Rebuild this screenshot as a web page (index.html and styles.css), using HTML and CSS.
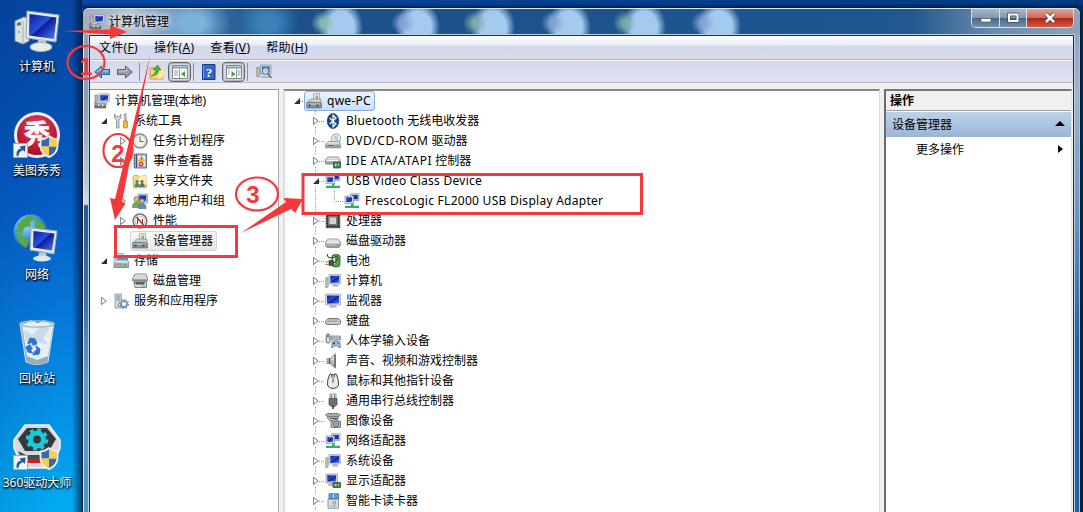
FILE: index.html
```
<!DOCTYPE html>
<html lang="zh-CN">
<head>
  <meta charset="utf-8">
  <title>计算机管理</title>
  <link rel="stylesheet" href="styles.css">
</head>
<body>
  <!-- Icon library -->
  <svg class="defs" width="0" height="0">
    <defs>
      <linearGradient id="screen" x1="0" y1="0" x2="1" y2="1">
        <stop offset="0" stop-color="#0a1fa0"/><stop offset=".45" stop-color="#2b50d8"/><stop offset=".5" stop-color="#0b1c9c"/><stop offset="1" stop-color="#4f7df0"/>
      </linearGradient>
      <linearGradient id="metal" x1="0" y1="0" x2="0" y2="1">
        <stop offset="0" stop-color="#f4f5f6"/><stop offset="1" stop-color="#8d9397"/>
      </linearGradient>
      <radialGradient id="redball" cx=".5" cy=".3" r=".7">
        <stop offset="0" stop-color="#e5405e"/><stop offset="1" stop-color="#a80d26"/>
      </radialGradient>
      <radialGradient id="globe" cx=".35" cy=".3" r=".75">
        <stop offset="0" stop-color="#9fdcff"/><stop offset=".6" stop-color="#2d86d4"/><stop offset="1" stop-color="#0d4694"/>
      </radialGradient>
    </defs>
    <symbol id="i-monitor" viewBox="0 0 16 16">
      <path d="M.5 1h15v11H.5z" fill="#d8dde0" stroke="#a4aaae" stroke-width=".8"/>
      <path d="M2 2.500h12v8H2z" fill="url(#screen)"/>
      <path d="M6 12h4l2.500 2.500h-9z" fill="#aeb4b8"/>
    </symbol>
    <symbol id="i-pc" viewBox="0 0 16 16">
      <path d="M.7 5l2.500-1v10l-2.500 1z" fill="#b9c3ae" stroke="#879078" stroke-width=".6"/>
      <path d="M4 1.500h11.500v9.500H4z" fill="#d8dde0" stroke="#a4aaae" stroke-width=".7"/>
      <path d="M5.300 2.800h9v7h-9z" fill="url(#screen)"/>
      <path d="M8 11h4l2 2.500H7z" fill="#aeb4b8"/>
    </symbol>
    <symbol id="i-manage" viewBox="0 0 16 16">
      <path d="M1 2h3v8H1z" fill="#b5bbbf" stroke="#70777c" stroke-width=".6"/>
      <path d="M5 .8h10.300v8H5z" fill="#dadfe3" stroke="#91999f" stroke-width=".7"/>
      <path d="M6.300 2.200h7.700v5.300H6.300z" fill="url(#screen)"/>
      <path d="M.8 10h11v5H.8z" fill="#737a7f" stroke="#474d52" stroke-width=".6"/>
      <path d="M1 11h10.500M3 9.500h5" stroke="#c7ccd0"/><path d="M4 11.500h1.500v1.500H4zm4 0h1.500v1.500H8z" fill="#eee"/>
      <path d="M10 9.500h3l1.500 2h-3z" fill="#b4babe"/>
    </symbol>
    <symbol id="i-device" viewBox="0 0 16 16">
      <path d="M7.500 1l6-.6V8h-6z" fill="#f1f1e6" stroke="#8b928f" stroke-width=".7"/>
      <path d="M9.500 2.500h2.500v3.500h-2.500z" fill="#8ab37b"/>
      <path d="M2 8.500L4.500 6H15v4l-3 1z" fill="#c9ced1" stroke="#7d8488" stroke-width=".6"/>
      <path d="M.7 9.500h13.800l1 1v4.500H.7z" fill="#889197" stroke="#586067" stroke-width=".6"/>
      <path d="M1.500 11h12.500" stroke="#d4d9dc"/><path d="M2.500 11.500h2v2h-2zm8 0h2v2h-2z" fill="#465058"/>
    </symbol>
    <symbol id="i-tools" viewBox="0 0 16 16">
      <path d="M1.500 1v4l2 2v8h2.500V7l2-2V1L6.500 3.500H3.200z" fill="#d0d4d6" stroke="#777d80" stroke-width=".7"/>
      <path d="M11 1l2-.5.5 7.500h-2z" fill="#bfc4c7" stroke="#777" stroke-width=".5"/>
      <path d="M10.500 8h4v6.500q-2 1.500-4 0z" fill="#f2b928" stroke="#a77714" stroke-width=".6"/>
    </symbol>
    <symbol id="i-clock" viewBox="0 0 16 16">
      <circle cx="8" cy="8" r="7" fill="#eceee8" stroke="#8b8f8e" stroke-width="1.600"/>
      <circle cx="8" cy="8" r="5.400" fill="#f8f6e9" stroke="#cfcab3" stroke-width=".6"/>
      <path d="M8 3.500V8.500h3.500" fill="none" stroke="#655e55"/>
    </symbol>
    <symbol id="i-event" viewBox="0 0 16 16">
      <path d="M2.500 1h12v14h-12z" fill="#a9b9d8" stroke="#55658b" stroke-width=".9"/>
      <path d="M4.500 1.500v13" stroke="#42506f"/><path d="M1.200 3h2.500M1.200 5.500h2.500M1.200 8h2.500M1.200 10.500h2.500M1.200 13h2.500" stroke="#777"/>
      <path d="M6 3h7v10H6z" fill="#e8ecf3"/><path d="M9.500 3l3 5h-6z" fill="#f2cf2a" stroke="#a78a10" stroke-width=".4"/>
      <path d="M9.500 4.800v1.600" stroke="#222" stroke-width=".8"/><circle cx="9" cy="11" r="2.500" fill="#d93d36"/><path d="M8 10l2 2m0-2l-2 2" stroke="#fff" stroke-width=".6"/>
    </symbol>
    <symbol id="i-share" viewBox="0 0 16 16">
      <path d="M1 3.500l1-1h4l1 1.500 7-2 .8 12-1 .8H1.500z" fill="#f2d982" stroke="#b89c48" stroke-width=".7"/>
      <path d="M7 3.500L14.500 2v9L7 12z" fill="#fbedb0"/>
      <circle cx="5" cy="8.500" r="1.500" fill="#5f7562"/><path d="M2.500 14q0-4 2.500-4t3 4z" fill="#568a66"/>
      <circle cx="10" cy="8.500" r="1.500" fill="#655f56"/><path d="M7.800 14q0-4 2.300-4t3 4z" fill="#52748d"/>
    </symbol>
    <symbol id="i-users" viewBox="0 0 16 16">
      <path d="M6 1h9.500v9H6z" fill="#d5dce2" stroke="#8b949c" stroke-width=".7"/><path d="M7.300 2.300h7v6h-7z" fill="url(#screen)"/>
      <circle cx="4.500" cy="6" r="2.400" fill="#e5b98b" stroke="#76543a" stroke-width=".7"/><path d="M.5 14.500Q.5 9 4.500 9t4 5.500z" fill="#78a65a" stroke="#537b3b" stroke-width=".6"/>
      <circle cx="10" cy="8" r="2.200" fill="#e4bb92" stroke="#76543a" stroke-width=".7"/><path d="M6.500 15.500q0-5 3.700-5t4 5z" fill="#658bb9" stroke="#43658d" stroke-width=".6"/>
    </symbol>
    <symbol id="i-perf" viewBox="0 0 16 16">
      <circle cx="8" cy="8" r="6.900" fill="#fff" stroke="#77746e" stroke-width="1.500"/>
      <circle cx="8" cy="8" r="5" fill="none" stroke="#c98f8a" stroke-width=".7"/>
      <path d="M5.500 11V6m5 5V6" stroke="#454545"/><path d="M4.500 4l7 8" stroke="#c3352c" stroke-width="1.700"/>
    </symbol>
    <symbol id="i-storage" viewBox="0 0 16 16">
      <path d="M1 2.500l2-2h7l1 1.500v4H1z" fill="#d9dddf" stroke="#82888b" stroke-width=".7"/>
      <path d="M5 4h9.500v5H5z" fill="#4e9ac8" stroke="#5e7283" stroke-width=".7"/>
      <path d="M1 9l1.500-2h12L15.500 9v5.500H1z" fill="url(#metal)" stroke="#727a7e" stroke-width=".7"/>
      <path d="M2.500 11h7" stroke="#777"/><path d="M11 10.500h2.500v2H11z" fill="#43bf3e"/>
    </symbol>
    <symbol id="i-diskmgmt" viewBox="0 0 16 16">
      <path d="M.8 5l2.500-4h10.500l1.500 3.500v3.500H.8z" fill="url(#metal)" stroke="#656b6e" stroke-width=".8"/>
      <path d="M1 5h14" stroke="#f5f5f5"/><path d="M2 9h12.500v5.500H3z" fill="#d7dadb" stroke="#656b6e" stroke-width=".8"/>
      <path d="M3 9h10l-1 2.500H4z" fill="#555d61"/><path d="M10 13h3" stroke="#4b5"/>
    </symbol>
    <symbol id="i-services" viewBox="0 0 16 16">
      <path d="M2 1h6.500v14H2z" fill="#d7dbde" stroke="#81888d" stroke-width=".7"/><path d="M3.300 3h4M3.300 5h4M3.300 7h4" stroke="#6e767c" stroke-width=".8"/>
      <circle cx="11" cy="11" r="3" fill="none" stroke="#7597b4" stroke-width="1.800"/><circle cx="11" cy="11" r="4.400" fill="none" stroke="#7597b4" stroke-width="1.400" stroke-dasharray="1.700 1.750"/>
      <circle cx="6.500" cy="12" r="1.500" fill="none" stroke="#7d8c97"/>
    </symbol>
    <symbol id="i-bluetooth" viewBox="0 0 16 16">
      <ellipse cx="8" cy="8" rx="5.800" ry="7.600" fill="#174987" stroke="#0c2c5c" stroke-width=".6"/>
      <path d="M4.800 5l6.200 6-3 2.800V2.200L11 5l-6.200 6" fill="none" stroke="#fff" stroke-width="1.200"/>
    </symbol>
    <symbol id="i-dvd" viewBox="0 0 16 16">
      <circle cx="11" cy="5.500" r="4.700" fill="#e8ecec" stroke="#8a9193" stroke-width=".8"/><circle cx="11" cy="5.500" r="1.500" fill="#fff" stroke="#8a9193" stroke-width=".7"/>
      <path d="M8 2l6 6.500M11 1v3" stroke="#a7b7b9" stroke-width=".7"/>
      <path d="M.6 11L3 8.500h11l1.400 2.500v3.800H.6z" fill="url(#metal)" stroke="#727a7d" stroke-width=".7"/><path d="M2.500 12.500h7" stroke="#666"/><path d="M11.500 11.500h2v2h-2z" fill="#4aba48"/>
    </symbol>
    <symbol id="i-ide" viewBox="0 0 16 16">
      <path d="M.6 6.500L3 4h10l2 2.500v4.500H.6z" fill="url(#metal)" stroke="#757c7f" stroke-width=".8"/><path d="M2 7.500h11" stroke="#fff"/>
      <path d="M8.500 9h7v6h-7z" fill="#427f5a" stroke="#234f36" stroke-width=".7"/><path d="M10 10.500h1.500v3H10zm3 0h1v2h-1z" fill="#c6dac2"/>
    </symbol>
    <symbol id="i-net" viewBox="0 0 16 16">
      <path d="M6.500.6h8.500v7H6.500z" fill="#ccd8e5" stroke="#8796a8" stroke-width=".7"/><path d="M8 2h5.800v4.300H8z" fill="#1834b8"/>
      <path d="M1 3h8.500v7.500H1z" fill="#d4dee8" stroke="#8796a8" stroke-width=".7"/><path d="M2.300 4.300h5.800v4.700H2.300z" fill="url(#screen)"/>
      <path d="M7 10.500h2.500v2.300H15v2.200H1v-2.200h6z" fill="#2faf6a"/>
    </symbol>
    <symbol id="i-cpu" viewBox="0 0 16 16">
      <rect x="1.500" y="1.500" width="13" height="13" fill="#3f4042" stroke="#2c2c2c" stroke-width="1.600" stroke-dasharray="1 .7"/>
      <path d="M2.500 2.500h10.500v10.500H2.500z" fill="#77797a" stroke="#444"/><path d="M4.500 4.500h6.500v6.500H4.500z" fill="#d0d1d2"/>
    </symbol>
    <symbol id="i-disk" viewBox="0 0 16 16">
      <path d="M.6 9L3 6h10l2.400 3v4l-1.400 1.500H2L.6 13z" fill="url(#metal)" stroke="#81888b" stroke-width=".8"/>
      <path d="M2 9.500h12" stroke="#fff" stroke-width=".8"/><path d="M12 11h1.500v1.500H12z" fill="#47b548"/>
    </symbol>
    <symbol id="i-battery" viewBox="0 0 16 16">
      <path d="M7 3q0-1.500 4-1.500T15 3v9q0 2-4 2t-4-2z" fill="#4fa347" stroke="#2c5a2c" stroke-width=".8"/><path d="M9 3.500v8" stroke="#c3ecb8" stroke-width="2"/>
      <path d="M2 1q0 4 4 4t5-2q3 1 1 4t-5 3" fill="none" stroke="#303632" stroke-width="1"/>
      <path d="M4 7.500h4q2 2 0 5H4z" fill="#4a4d4b" stroke="#222" stroke-width=".5"/><path d="M.5 9H4M.5 11.500H4" stroke="#a98446" stroke-width="1.200"/>
    </symbol>
    <symbol id="i-keyboard" viewBox="0 0 16 16">
      <path d="M1 8q1-2.500 3-2.500h8q2.500 0 3.500 2.500v2q-.5 1.500-2 1.500H3Q1 11.500.5 10z" fill="#c8cccf" stroke="#666c70" stroke-width=".9"/>
      <path d="M3.500 7h9M2.800 8.500h10.800" stroke="#7a8085" stroke-width=".9" stroke-dasharray="1 .8"/>
    </symbol>
    <symbol id="i-hid" viewBox="0 0 16 16">
      <path d="M1.200 2.500Q3-1 5 2.500V9q-1.800 2.500-3.800 0z" fill="#e1e4e6" stroke="#555c62" stroke-width=".9"/><path d="M3 1.500v3" stroke="#333"/>
      <path d="M6 3h9.500v4H6z" fill="#c7cdd3" stroke="#6f787f" stroke-width=".7"/><path d="M7 4.500h8M7 6h8" stroke="#6f787f" stroke-width=".7" stroke-dasharray="1 .8"/>
      <path d="M7 9q4-2 8 0l.5 5.500q-2 1-3-1.500h-3q-1.500 2.500-3 1.500z" fill="#a5bfd0" stroke="#55768c" stroke-width=".7"/><path d="M8 10.500h2M9 9.500v2" stroke="#334"/><circle cx="13" cy="10.500" r=".7" fill="#356"/>
    </symbol>
    <symbol id="i-sound" viewBox="0 0 16 16">
      <path d="M2 5.500h3L10.500.8v14.400L5 10.500H2z" fill="url(#metal)" stroke="#7a8084" stroke-width=".8"/><path d="M10 2v12" stroke="#62686b" stroke-width="1.500"/><path d="M4.500 5.500v5" stroke="#555" stroke-width="1.500"/>
    </symbol>
    <symbol id="i-mouse" viewBox="0 0 16 16">
      <path d="M4.500 1.500L6 .7 8 6l2-5.300 1.500.8q2.500 6 2 10.500-1 3.500-5.500 3.500T2.500 12q-.5-4.500 2-10.500z" fill="#e8eaeb" stroke="#414648"/>
      <path d="M6 1l2 10 2-10z" fill="#4e5456"/><path d="M7.300 2h1.400v5H7.300z" fill="#ddd"/>
    </symbol>
    <symbol id="i-usb" viewBox="0 0 16 16">
      <path d="M5 1h6v5H5z" fill="#e5e7e8" stroke="#7a7f82" stroke-width=".8"/><path d="M6.500 2.500v2m3-2v2" stroke="#555"/>
      <path d="M4 5.500h8v6Q10.500 13.500 9 13.500H7Q5 13 4 11.500z" fill="#6b7073" stroke="#404446" stroke-width=".7"/><path d="M8 13v3" stroke="#333" stroke-width="1.500"/>
    </symbol>
    <symbol id="i-imaging" viewBox="0 0 16 16">
      <path d="M.5 2l2-1.500h10.500L15.500 2l-2 1.500h-11z" fill="#a8adaf" stroke="#555d62" stroke-width=".7"/><path d="M2 4h12l-2 3.500H4z" fill="#d5d8da" stroke="#5f666a" stroke-width=".7"/><path d="M4.500 5.500h8" stroke="#555"/>
      <path d="M6 8h2l1-1.500h3.500l1 1.500h2v6.500H6z" fill="#aeb9c2" stroke="#4e5a63" stroke-width=".7"/><circle cx="11" cy="11" r="2.500" fill="#e0eef4" stroke="#37444c"/><circle cx="11" cy="11" r="1" fill="#386b8c"/>
    </symbol>
    <symbol id="i-display" viewBox="0 0 16 16">
      <path d="M1 1h11.500v9H1z" fill="#d8dde0" stroke="#92999e" stroke-width=".8"/><path d="M2.300 2.300h8.800v6.200H2.300z" fill="url(#screen)"/>
      <path d="M4 10h4.500l1.500 3H3z" fill="#b4babe"/><path d="M8 9.500h7.500v5H8z" fill="#3c7c4e" stroke="#234c31" stroke-width=".7"/><path d="M9.500 11h2v2h-2zm3.500 0h1v2h-1z" fill="#d0d59e"/>
    </symbol>
    <symbol id="i-card" viewBox="0 0 16 16">
      <path d="M4 .7h9.500V7H4z" fill="#4ba2dc" stroke="#266a9f" stroke-width=".7"/><path d="M8.500 1v4" stroke="#c9e8fb"/>
      <path d="M3 5.500h10.500v9.800H3z" fill="#d9dcde" stroke="#82898d" stroke-width=".8"/><path d="M4 6h8.500" stroke="#5a6268"/><path d="M8 8.500h2.500V11H8z" fill="#f5f6f6" stroke="#899"/><path d="M5 13h6" stroke="#aaa"/>
    </symbol>
    <symbol id="i-back" viewBox="0 0 16 16"><path d="M.8 8L7.500 2v3.500h8v5h-8V14z" fill="#48a5e5" stroke="#23659f"/><path d="M3 7.700l4-3V7h7.500" fill="none" stroke="#a6dbfb"/></symbol>
    <symbol id="i-forward" viewBox="0 0 16 16"><path d="M15.200 8L8.500 2v3.500h-8v5h8V14z" fill="#999da2" stroke="#5c6166"/><path d="M1.500 7h8V4.500" fill="none" stroke="#c5c8cb"/></symbol>
    <symbol id="i-up" viewBox="0 0 16 16">
      <path d="M2 4h4l1.500 1.500H14L15 15H2z" fill="#f2d27c" stroke="#b8913a" stroke-width=".8"/><path d="M10 4.500l5-1V14l-5 1z" fill="#f9e6a5"/>
      <path d="M3 12q5-2 4.500-6.500H5L9.500 1l3.500 5h-2.500Q11 11 3 12z" fill="#45bb38" stroke="#267c20" stroke-width=".6"/>
    </symbol>
    <symbol id="i-help" viewBox="0 0 16 16"><path d="M1.500.5h12.500v15H1.500z" fill="#3865c9" stroke="#18398b"/><path d="M2.500 1.500v13" stroke="#7c9dea"/></symbol>
    <symbol id="i-paneleft" viewBox="0 0 16 14">
      <path d="M.5.500h15v13H.5z" fill="#fff" stroke="#7d8794"/><path d="M1 1.500h14v2H1z" fill="#8994a5"/><path d="M7.500 4v9M2 6h4M2 8h4M2 10h4" stroke="#8b98a8"/>
      <path d="M13 6v6L9 9z" fill="#34a82e"/>
    </symbol>
    <symbol id="i-paneright" viewBox="0 0 16 14">
      <path d="M.5.500h15v13H.5z" fill="#fff" stroke="#7d8794"/><path d="M1 1.500h14v2H1z" fill="#8994a5"/><path d="M10.500 4v9M11.500 6h3M11.500 8h3M11.500 10h3M2 5h1.500M2 7h1.500M2 9h1.500" stroke="#8b98a8"/>
      <path d="M5.500 6v6l4-3z" fill="#34a82e"/>
    </symbol>
    <symbol id="i-scan" viewBox="0 0 16 16">
      <path d="M.8 3.500h2.500v9H.8z" fill="#c7ccb8" stroke="#777e70" stroke-width=".7"/><path d="M4.500 1H15v9H4.500z" fill="#cdd5dc" stroke="#848d95" stroke-width=".7"/><path d="M6 2.500h7.500V8.500H6z" fill="#315cc2"/>
      <path d="M5 12h8v2H5z" fill="#afb5bb"/><circle cx="9.500" cy="7" r="3.300" fill="#cbe5fa" fill-opacity=".85" stroke="#69777f"/><path d="M11.800 9.500l3.500 4.500" stroke="#6b6572" stroke-width="1.700"/>
    </symbol>
    <symbol id="shield" viewBox="0 0 20 24">
      <path d="M10 1Q5 4.500 1 4.500V12q0 7 9 11.200Q19 19 19 12V4.500q-4 0-9-3.500z" fill="#ead47c" stroke="#e9edf0" stroke-width="1.600"/>
      <path d="M10 2.500Q6 5.300 2.300 5.500V12H10zM10 12h7.700q0 6-7.700 10z" fill="#3468b4"/><path d="M10 2.500q4 2.800 7.700 3V12H10zM10 12H2.300q0 6 7.700 10z" fill="#f2cf52"/>
    </symbol>
    <symbol id="shortcut" viewBox="0 0 15 15">
      <path d="M.5.500h14v14H.5z" fill="#f2f5f8" stroke="#9daab7"/><path d="M4 13.500Q2 7 8 5.500L6.500 3.500 12.500 2.500 12 9 10.300 7.300Q5.500 8.500 5.500 13z" fill="#24599f"/>
    </symbol>
  </svg>

  <div class="desktop">
    <div class="shortcut">
      <svg class="big" viewBox="0 0 48 48">
        <path d="M2 15l9-4 5 1v23l-6 3-8-3z" fill="#dce1e4" stroke="#91999f"/><path d="M10 15v22" stroke="#abb2b7"/><path d="M4 17l4-1v3l-4 1z" fill="#657079"/><circle cx="6" cy="26" r="1" fill="#5a5"/>
        <path d="M14 5l32 4-3 27-30-4z" fill="#e5e9eb" stroke="#9ca8b1"/><path d="M16.500 8l27 3.400L41 33l-25-3.500z" fill="url(#screen)"/>
        <path d="M25 33l8 1 1 6h-9z" fill="#bfc7cc"/><ellipse cx="28" cy="41" rx="11" ry="4.500" fill="#e9ecee" stroke="#abb3b8"/>
      </svg>
      <span>计算机</span>
    </div>
    <div class="shortcut">
      <svg class="big" viewBox="0 0 48 48">
        <circle cx="24" cy="25" r="23" fill="#f1eeee"/><circle cx="24" cy="25" r="20" fill="url(#redball)"/>
        <text class="logo-char" x="24" y="34" text-anchor="middle">秀</text>
        <use href="#shortcut" x="0" y="33" width="15" height="15"/><use href="#shield" x="26" y="25" width="20" height="23"/>
      </svg>
      <span>美图秀秀</span>
    </div>
    <div class="shortcut">
      <svg class="big" viewBox="0 0 48 48">
        <circle cx="18" cy="18" r="17.500" fill="url(#globe)"/><path d="M5 10q6-8 14-9l3 4-5 3 1 4-7 2-2 6-6-2zM22 5l7 3 4 6-7 3-4-5zM3 20l7 2 6 5-3 7q-8-4-10-14z" fill="#58aa46"/>
        <path d="M18 14l26 3-3 23-24-4z" fill="#e5e9eb" stroke="#9ca8b1"/><path d="M20.500 17l21 2.500-2.500 17-19-3z" fill="url(#screen)"/><path d="M26 38l7 1 1 5h-9z" fill="#bfc7cc"/><ellipse cx="29" cy="44.500" rx="9" ry="3" fill="#e4e7e9"/>
      </svg>
      <span>网络</span>
    </div>
    <div class="shortcut">
      <svg class="big" viewBox="0 0 48 48">
        <path d="M7 6l34-1-6 39q-11 5-22 0z" fill="#9fb9c8" fill-opacity=".85" stroke="#dbe5eb"/>
        <path d="M9 7l9-5 7 3 6-3 9 5-5 31-11 4-10-4z" fill="#e5eff5"/><path d="M11 12l9 5 7-9 10 3-7 9 5 7-11-3-5 10-6-9z" fill="#cadbe7"/>
        <ellipse cx="24" cy="6" rx="17" ry="3" fill="none" stroke="#aabbc6" stroke-width="1.300"/>
        <path d="M17 20l5 1 2 5-4 1-1-3-4 2zM13 29l4-2 2 4-2 1 3 3-5-1zM23 28l4 3-1 5-6 1 2-4 2-1z" fill="#2f72cf" stroke="#2f72cf"/><path d="M13 41q11 4 22 0l-.5 3q-10 5-21 0z" fill="#a7aaa8"/>
      </svg>
      <span>回收站</span>
    </div>
    <div class="shortcut">
      <svg class="big" viewBox="0 0 48 48">
        <path d="M12 3h24l11 15v8L38 46H10L1 26v-8z" fill="#d5d9dc" stroke="#f5f6f7" stroke-width="1.500"/><path d="M14 6h20l9 11-7 12H12L5 17z" fill="#34383d"/>
        <path d="M5 29l8 4h22l8-4-5 12H10z" fill="#464b50"/><path d="M12 37h25v4H12z" fill="#cf2027"/>
        <circle cx="24" cy="17.500" r="6.500" fill="none" stroke="#19cdd7" stroke-width="5"/><circle cx="24" cy="17.500" r="9.500" fill="none" stroke="#19cdd7" stroke-width="3.500" stroke-dasharray="3.700 3.760"/>
        <use href="#shortcut" x="0" y="33" width="15" height="15"/><use href="#shield" x="26" y="25" width="20" height="23"/>
      </svg>
      <span>360驱动大师</span>
    </div>
  </div>

  <div class="window">
    <div class="titlebar">
      <svg class="icon"><use href="#i-manage"/></svg>
      <span class="caption">计算机管理</span>
      <div class="controls">
        <div class="ctl"><svg width="12" height="12"><path d="M1 6.500h10v3.500H1z" fill="#fff" stroke="#4a5a6d" stroke-width=".7"/></svg></div>
        <div class="ctl"><svg width="12" height="12"><path d="M2 2.500h8.500v6.500H2z" fill="none" stroke="#3a4a5e" stroke-width="3.500"/><path d="M2 2.500h8.500v6.500H2z" fill="none" stroke="#fff" stroke-width="2"/></svg></div>
        <div class="ctl close"><svg width="12" height="12"><path d="M2 2l8 8M10 2l-8 8" stroke="#5c3030" stroke-width="4"/><path d="M2 2l8 8M10 2l-8 8" stroke="#fff" stroke-width="2.500"/></svg></div>
      </div>
    </div>

    <div class="client">
      <div class="menubar">
        <span>文件(<u>F</u>)</span>
        <span>操作(<u>A</u>)</span>
        <span>查看(<u>V</u>)</span>
        <span>帮助(<u>H</u>)</span>
      </div>
      <div class="toolbar">
        <svg class="icon"><use href="#i-back"/></svg>
        <svg class="icon fwd"><use href="#i-forward"/></svg>
        <i class="sep"></i>
        <svg class="icon up"><use href="#i-up"/></svg>
        <div class="toggle"><svg width="16" height="14"><use href="#i-paneleft"/></svg></div>
        <i class="sep tight"></i>
        <svg class="icon help" viewBox="0 0 16 16"><use href="#i-help"/><text class="qmark" x="8" y="13" text-anchor="middle">?</text></svg>
        <div class="toggle"><svg width="16" height="14"><use href="#i-paneright"/></svg></div>
        <i class="sep tight"></i>
        <svg class="icon scan"><use href="#i-scan"/></svg>
      </div>

      <div class="panes">
        <div class="pane nav">
          <div class="row root"><svg class="icon"><use href="#i-manage"/></svg><span>计算机管理(本地)</span></div>
          <div class="row l1"><i class="open"></i><svg class="icon"><use href="#i-tools"/></svg><span>系统工具</span></div>
          <div class="row l2"><i class="shut"></i><svg class="icon"><use href="#i-clock"/></svg><span>任务计划程序</span></div>
          <div class="row l2"><i class="shut"></i><svg class="icon"><use href="#i-event"/></svg><span>事件查看器</span></div>
          <div class="row l2"><i class="none"></i><svg class="icon"><use href="#i-share"/></svg><span>共享文件夹</span></div>
          <div class="row l2"><i class="shut"></i><svg class="icon"><use href="#i-users"/></svg><span>本地用户和组</span></div>
          <div class="row l2"><i class="shut"></i><svg class="icon"><use href="#i-perf"/></svg><span>性能</span></div>
          <div class="row l2"><i class="none"></i><div class="picked grey"><svg class="icon"><use href="#i-device"/></svg><span>设备管理器</span></div></div>
          <div class="row l1"><i class="open"></i><svg class="icon"><use href="#i-storage"/></svg><span>存储</span></div>
          <div class="row l2"><i class="none"></i><svg class="icon"><use href="#i-diskmgmt"/></svg><span>磁盘管理</span></div>
          <div class="row l1"><i class="shut"></i><svg class="icon"><use href="#i-services"/></svg><span>服务和应用程序</span></div>
        </div>

        <div class="pane devices">
          <div class="row top"><i class="open"></i><div class="picked"><svg class="icon"><use href="#i-device"/></svg><span class="latin">qwe-PC</span></div></div>
          <div class="row dev"><i class="shut"></i><svg class="icon"><use href="#i-bluetooth"/></svg><span><b class="latin">Bluetooth</b> 无线电收发器</span></div>
          <div class="row dev"><i class="shut"></i><svg class="icon"><use href="#i-dvd"/></svg><span><b class="caps">DVD/CD-ROM</b> 驱动器</span></div>
          <div class="row dev"><i class="shut"></i><svg class="icon"><use href="#i-ide"/></svg><span><b class="caps">IDE ATA/ATAPI</b> 控制器</span></div>
          <div class="row dev"><i class="open"></i><svg class="icon"><use href="#i-net"/></svg><span class="latin">USB Video Class Device</span></div>
          <div class="row dev sub"><i class="line"></i><i class="elbow"></i><svg class="icon"><use href="#i-net"/></svg><span class="latin">FrescoLogic FL2000 USB Display Adapter</span></div>
          <div class="row dev"><i class="shut"></i><svg class="icon"><use href="#i-cpu"/></svg><span>处理器</span></div>
          <div class="row dev"><i class="shut"></i><svg class="icon"><use href="#i-disk"/></svg><span>磁盘驱动器</span></div>
          <div class="row dev"><i class="shut"></i><svg class="icon"><use href="#i-battery"/></svg><span>电池</span></div>
          <div class="row dev"><i class="shut"></i><svg class="icon"><use href="#i-pc"/></svg><span>计算机</span></div>
          <div class="row dev"><i class="shut"></i><svg class="icon"><use href="#i-monitor"/></svg><span>监视器</span></div>
          <div class="row dev"><i class="shut"></i><svg class="icon"><use href="#i-keyboard"/></svg><span>键盘</span></div>
          <div class="row dev"><i class="shut"></i><svg class="icon"><use href="#i-hid"/></svg><span>人体学输入设备</span></div>
          <div class="row dev"><i class="shut"></i><svg class="icon"><use href="#i-sound"/></svg><span>声音、视频和游戏控制器</span></div>
          <div class="row dev"><i class="shut"></i><svg class="icon"><use href="#i-mouse"/></svg><span>鼠标和其他指针设备</span></div>
          <div class="row dev"><i class="shut"></i><svg class="icon"><use href="#i-usb"/></svg><span>通用串行总线控制器</span></div>
          <div class="row dev"><i class="shut"></i><svg class="icon"><use href="#i-imaging"/></svg><span>图像设备</span></div>
          <div class="row dev"><i class="shut"></i><svg class="icon"><use href="#i-net"/></svg><span>网络适配器</span></div>
          <div class="row dev"><i class="shut"></i><svg class="icon"><use href="#i-pc"/></svg><span>系统设备</span></div>
          <div class="row dev"><i class="shut"></i><svg class="icon"><use href="#i-display"/></svg><span>显示适配器</span></div>
          <div class="row dev"><i class="shut"></i><svg class="icon"><use href="#i-card"/></svg><span>智能卡读卡器</span></div>
        </div>

        <div class="pane actions">
          <div class="actions-title">操作</div>
          <div class="actions-group"><span>设备管理器</span><svg width="10" height="5"><path d="M0 5h10L5 0z"/></svg></div>
          <div class="actions-item"><span>更多操作</span><svg width="5" height="8"><path d="M0 0v8l5-4z"/></svg></div>
        </div>
      </div>
    </div>
  </div>

  <!-- Red step marks -->
  <svg class="marks" width="1083" height="512" viewBox="0 0 1083 512">
    <g fill="none" stroke="#f5383b">
      <ellipse cx="86" cy="62.500" rx="18.500" ry="16.500" stroke-width="2.200"/>
      <ellipse cx="118" cy="150.500" rx="14.500" ry="16.500" stroke-width="2.200"/>
      <ellipse cx="257" cy="194" rx="21" ry="16.500" stroke-width="2.200"/>
      <rect x="115.500" y="226.500" width="121" height="30" stroke-width="3"/>
      <rect x="303" y="174.500" width="338.500" height="39" stroke-width="3"/>
    </g>
    <g fill="#f5383b">
      <path d="M62 31l48-1.500V25l17 7-17 7v-4.500z"/>
      <path d="M150.500 54L122 202l3.500 1.500L115 220l-5-22 5 1z"/>
      <path d="M241 233L286 202l-2.500-4L303 199l-8 14-4-4z"/>
    </g>
    <g class="step">
      <text x="86" y="75" text-anchor="middle">1</text>
      <text x="118" y="162" text-anchor="middle">2</text>
      <text x="253" y="203" text-anchor="middle">3</text>
    </g>
  </svg>
</body>
</html>
```
FILE: styles.css
```
* {
  box-sizing: border-box;
}

body {
  margin: 0;
  width: 1083px;
  height: 512px;
  overflow: hidden;
  display: flex;
  position: relative;
  font-family: "Noto Sans", "Noto Sans CJK SC", sans-serif;
  font-size: 12px;
  color: #000;
  background:
    linear-gradient(transparent 3px, rgba(0, 10, 40, 0.5) 8px) 82px 0 / 100% 8px no-repeat,
    linear-gradient(90deg, transparent 80px, #003a80 100%) 0 0 / 100% 8px no-repeat,
    linear-gradient(#062a5c, #04224a) 100% 0 / 8px 100% no-repeat,
    linear-gradient(90deg, rgba(0, 40, 120, 0.12), transparent 60px),
    linear-gradient(#0646a0 0, #0450b0 110px, #0460c8 220px, #067cdc 330px, #0496e8 430px, #02acf2 512px);
}

.defs {
  position: absolute;
}

.icon {
  width: 16px;
  height: 16px;
  flex: none;
}

/* Desktop shortcuts */
.desktop {
  width: 82px;
  flex: none;
  height: 512px;
  padding-top: 6px;
  overflow: hidden;
  background: linear-gradient(90deg, transparent 72px, rgba(0, 15, 50, 0.65) 82px);
}

.shortcut {
  width: 74px;
  height: 104px;
  display: flex;
  flex-direction: column;
  align-items: center;
}

.shortcut:last-child {
  height: 84px;
}

.shortcut .big {
  width: 48px;
  height: 48px;
  flex: none;
}

.shortcut span {
  margin-top: 4px;
  line-height: 18px;
  color: #fff;
  white-space: nowrap;
  text-shadow: 0 1px 2px #000, 1px 1px 2px #000;
}

.logo-char {
  font: 900 27px "Noto Sans CJK SC", sans-serif;
  fill: #fff;
}

/* Glass window frame */
.window {
  width: 999px;
  height: 505px;
  margin-top: 7px;
  flex: none;
  display: flex;
  flex-direction: column;
  padding: 0 6px;
  border: 1px solid #0a1c33;
  border-bottom: 0;
  border-radius: 7px 7px 0 0;
  box-shadow: inset 1px 1px 0 #dfe9f2, inset -1px 0 0 #9ec4e0;
  background:
    linear-gradient(#97a3b8 0, #8b9bb5 90px, #bac7d8 175px, #d0dce8 196px, #1f5c98 198px, #3c78b0 300px, #5d9ccc 370px, #4c97cc 100%) 0 0 / 8px 100% no-repeat,
    linear-gradient(#8fa3b8 0, #9fb4c8 90px, #6f98c0 200px, #2463a5 330px, #2463a5 100%) 100% 0 / 9px 100% no-repeat,
    #1d558d;
}

.titlebar {
  height: 27px;
  flex: none;
  margin: 0 -6px;
  padding-left: 6px;
  display: flex;
  align-items: center;
  border-top: 1px solid #dfe9f2;
  border-radius: 6px 6px 0 0;
  background:
    radial-gradient(circle at 240px 14px, rgba(140, 190, 175, 0.9) 0 3px, transparent 12px),
    radial-gradient(circle at 320px 14px, rgba(133, 163, 214, 0.9) 0 3px, transparent 12px),
    radial-gradient(circle at 392px 14px, rgba(125, 175, 170, 0.9) 0 3px, transparent 12px),
    radial-gradient(circle at 470px 14px, rgba(133, 163, 214, 0.9) 0 3px, transparent 12px),
    radial-gradient(circle at 542px 14px, rgba(125, 175, 170, 0.9) 0 3px, transparent 12px),
    radial-gradient(circle at 620px 14px, rgba(133, 163, 214, 0.9) 0 3px, transparent 12px),
    radial-gradient(ellipse 22px 26px at 258px 18px, #a5caef 0 60%, transparent),
    radial-gradient(ellipse 22px 26px at 335px 18px, #a5caef 0 60%, transparent),
    radial-gradient(ellipse 22px 26px at 410px 18px, #a5caef 0 60%, transparent),
    radial-gradient(ellipse 22px 26px at 486px 18px, #a5caef 0 60%, transparent),
    radial-gradient(ellipse 22px 26px at 561px 18px, #a5caef 0 60%, transparent),
    radial-gradient(ellipse 22px 26px at 636px 18px, #a5caef 0 60%, transparent),
    radial-gradient(ellipse 38px 26px at 110px 14px, #7db2da 0 30%, transparent),
    radial-gradient(ellipse 30px 24px at 185px 14px, #3c82ba 0 30%, transparent),
    linear-gradient(90deg, #a3aec0 0, #b3c0d0 50px, #8ba5c2 75px, #2f679d 130px, #1c5088 220px, #1d5790 780px, #22588e 830px, #6a8bad 910px, #8fa4b9 100%);
}

.caption {
  margin: -2px 0 0 4px;
  text-shadow: 0 0 5px #fff, 0 0 8px #fff;
}

.controls {
  margin: 0 6px 0 auto;
  align-self: flex-start;
  display: flex;
  height: 19px;
  border: 1px solid #d5dfe9;
  border-top: 0;
  border-radius: 0 0 5px 5px;
  overflow: hidden;
}

.ctl {
  width: 28px;
  display: flex;
  align-items: center;
  justify-content: center;
  border-right: 1px solid #d5dfe9;
  background: linear-gradient(#a9b8c9 0, #8497ad 48%, #4c6684 52%, #7790aa 100%);
}

.ctl + .ctl {
  width: 27px;
}

.ctl.close {
  width: 46px;
  border-right: 0;
  background: linear-gradient(#e0a496 0, #cf6b58 48%, #b0281a 52%, #cf5a3c 100%);
}

.client {
  flex: 1;
  min-height: 0;
  border: 1px solid #16324f;
  border-bottom: 0;
  box-shadow: 0 0 0 1px #b9d0e4;
  background: #f0f0f0;
  display: flex;
  flex-direction: column;
}

.menubar {
  height: 24px;
  flex: none;
  padding: 0 0 1px 9px;
  display: flex;
  align-items: center;
  gap: 16px;
  border-bottom: 1px solid #aeb3c4;
  background: linear-gradient(#fff 0, #eaeef8 9px, #d3d9ec 10px, #d5dbeb 100%);
}

.menubar span {
  letter-spacing: 0.3px;
}

.toolbar {
  height: 23px;
  flex: none;
  padding-left: 4px;
  display: flex;
  align-items: center;
  border-top: 1px solid #fff;
  border-bottom: 1px solid #b4b9ca;
  background: linear-gradient(#d3d8ea, #e0e3f4);
}

.fwd {
  margin-left: 7px;
}

.sep {
  width: 1px;
  height: 18px;
  margin-left: 6px;
  background: #8c919e;
}

.sep.tight {
  margin-left: 2px;
}

.up {
  margin: 0 4px 0 8px;
}

.toggle {
  width: 23px;
  height: 20px;
  display: flex;
  align-items: center;
  justify-content: center;
  border: 1px solid #62676f;
  border-radius: 4px;
  background: #d5d9e3;
  box-shadow: inset 0 0 0 1px #b5bac6;
}

.help {
  margin: 0 5px 0 7px;
}

.qmark {
  font: bold 13px "Liberation Serif", serif;
  fill: #fff;
}

.scan {
  margin-left: 8px;
}

/* Three panes */
.panes {
  flex: 1;
  min-height: 0;
  margin-top: 6px;
  display: flex;
}

.pane {
  flex: none;
  padding-top: 1px;
  background: #fff;
  border: 1px solid #8b8f96;
  border-right-color: #a5a8ac;
  border-bottom: 0;
}

.nav {
  width: 189px;
  border-left: 0;
}

.devices {
  width: 597px;
  margin-left: 4px;
  border-width: 2px 1px 0 2px;
  border-color: #85888c #dcdcdc;
  padding-top: 0;
}

.actions {
  width: 188px;
  margin-left: 4px;
  border-width: 2px 1px 0 2px;
  border-color: #74777a #e3e3e3 #fff #6c6c6c;
  padding: 0;
}

.row {
  height: 20px;
  display: flex;
  align-items: center;
  white-space: nowrap;
}

.row span {
  margin-left: 5px;
  line-height: 18px;
}

/* Roman text runs slightly wider than the default spacing */
.row .latin {
  font-weight: normal;
  letter-spacing: 0.27px;
}

.row .caps {
  font-weight: normal;
  letter-spacing: 0.55px;
}

.root {
  padding-left: 4px;
}

.l1 {
  padding-left: 8px;
}

.l2 {
  padding-left: 27px;
}

.top {
  padding-left: 6px;
}

.dev {
  padding-left: 25px;
}

.row i {
  width: 15px;
  height: 20px;
  flex: none;
  display: flex;
  align-items: center;
}

.top i {
  background: repeating-linear-gradient(90deg, #999 0 1px, transparent 1px 2px) 9px 10px / 6px 1px no-repeat;
}

.dev i {
  background: repeating-linear-gradient(90deg, #999 0 1px, transparent 1px 2px) 9px 10px / 6px 1px no-repeat,
    repeating-linear-gradient(#999 0 1px, transparent 1px 2px) 5px 0 / 1px 4px no-repeat,
    repeating-linear-gradient(#999 0 1px, transparent 1px 2px) 5px 16px / 1px 4px no-repeat;
}

.shut::before {
  content: "";
  width: 6px;
  height: 9px;
  margin-left: 3px;
  background: #8a8a8a;
  clip-path: polygon(0 0, 100% 50%, 0 100%, 0 0, 1px 2px, 1px 7px, 4.500px 50%, 1px 2px);
}

.open::before {
  content: "";
  width: 6px;
  height: 6px;
  margin-left: 3px;
  background: #333;
  clip-path: polygon(100% 0, 100% 100%, 0 100%);
}

.sub i.line {
  width: 19px;
  background: repeating-linear-gradient(#999 0 1px, transparent 1px 2px) 5px 0 / 1px 20px no-repeat;
}

.sub i.elbow {
  background: repeating-linear-gradient(90deg, #999 0 1px, transparent 1px 2px) 5px 10px / 10px 1px no-repeat,
    repeating-linear-gradient(#999 0 1px, transparent 1px 2px) 5px 0 / 1px 10px no-repeat;
}

.picked {
  height: 20px;
  margin-left: -2px;
  padding: 0 3px 0 1px;
  display: flex;
  align-items: center;
  border: 1px solid #84acdd;
  border-radius: 3px;
  background: linear-gradient(#eaf3fd, #c9def7);
}

.picked.grey {
  border-color: #d4d4d4;
  background: linear-gradient(#fafafa, #e6e6e6);
}

.actions-title {
  height: 20px;
  padding-left: 4px;
  line-height: 20px;
  font-weight: bold;
  background: #f0f0f0;
  border-bottom: 1px solid #a0a0a0;
}

.actions-group {
  height: 25px;
  margin-top: 1px;
  padding: 0 6px 2px 6px;
  display: flex;
  align-items: center;
  justify-content: space-between;
  background: linear-gradient(#bdd2e9, #9ab5d5);
}

.actions-item {
  height: 23px;
  padding: 0 8px 0 30px;
  display: flex;
  align-items: center;
  justify-content: space-between;
}

/* Marks drawn over the window */
.marks {
  position: absolute;
  left: 0;
  top: 0;
}

.step {
  font: bold 24px "Liberation Sans", sans-serif;
  fill: #f5383b;
}
```
